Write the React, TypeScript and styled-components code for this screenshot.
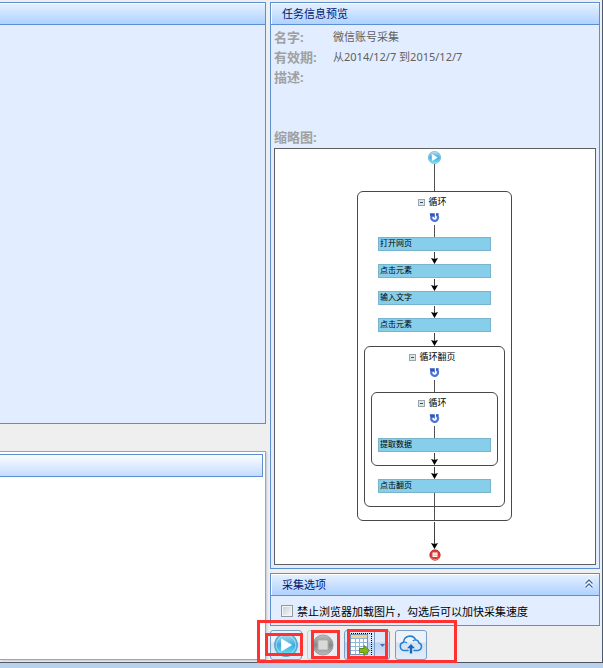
import React from "react";
import styled, { createGlobalStyle } from "styled-components";

const GlobalStyle = createGlobalStyle`
  * { box-sizing: border-box; }
  body {
    margin: 0;
    background: #b9d1ea;
    font-family: "Noto Sans", "Noto Sans CJK SC", sans-serif;
    font-size: 11px;
    color: #000;
  }
  button, input { font: inherit; }
  h2, dl, dd, dt, p { margin: 0; font-weight: normal; }
`;

const Desktop = styled.div`
  min-height: 100vh;
  display: flex;
  flex-direction: column;
  padding-bottom: 5px;
`;

const AppWindow = styled.main`
  flex: 1;
  display: grid;
  grid-template-columns: minmax(0, 1fr) 330px;
  gap: 4px;
  padding: 2px 2px 2px 0;
  background: #efefef;
  border-right: 1px solid #4a5a72;
  border-bottom: 1px solid #4d5460;
`;

const LeftColumn = styled.div`
  display: grid;
  grid-template-rows: 422fr 209fr;
  gap: 27px;
`;

const RightColumn = styled.div`
  display: flex;
  flex-direction: column;
  gap: 4px;
`;

const Panel = styled.section<{ $grow?: boolean; $openLeft?: boolean }>`
  display: flex;
  flex-direction: column;
  flex: ${(p) => (p.$grow ? "1" : "none")};
  border: 1px solid #5b8fcf;
  border-left-width: ${(p) => (p.$openLeft ? "0" : "1px")};
  background: #e2eeff;
`;

const PanelHeader = styled.header<{ $openLeft?: boolean }>`
  display: flex;
  align-items: center;
  justify-content: space-between;
  height: 22px;
  padding: 0 4px 0 11px;
  border-bottom: 1px solid #5b8fcf;
  background: linear-gradient(#e6f1ff, #afd2ff);
  box-shadow: inset ${(p) => (p.$openLeft ? "0" : "1px")} 1px 0 #fff;
  color: #00156e;
`;

const PanelTitle = styled.h2`
  font-size: 11px;
  line-height: 20px;
`;

const ResultPanel = styled.section`
  padding: 2px 2px 0 0;
  border: 1px solid #8ea8cb;
  border-left: 0;
  background: #fff;
  box-shadow: 1px 1px 2px #c3cad6;
`;

const ResultHeader = styled.header`
  height: 23px;
  border: 1px solid #5b8fcf;
  border-left: 0;
  background: linear-gradient(#fbfdff, #c4dcff);
`;

const InfoBody = styled.div`
  flex: 1;
  display: flex;
  flex-direction: column;
  padding: 3px;
`;

const InfoList = styled.dl`
  display: grid;
  grid-template-columns: 59px 1fr;
  grid-template-rows: 20px 20px 60px;
`;

const InfoLabel = styled.dt`
  font-size: 13px;
  font-weight: bold;
  line-height: 18px;
  color: #a0a0a0;
`;

const InfoValue = styled.dd`
  line-height: 17px;
  color: #606060;
`;

const ThumbnailLabel = styled.p`
  height: 20px;
  font-size: 13px;
  font-weight: bold;
  line-height: 18px;
  color: #a0a0a0;
`;

const Thumbnail = styled.div`
  flex: 1;
  display: flex;
  flex-direction: column;
  align-items: center;
  padding: 2px 1px 2px 0;
  border: 1px solid #606060;
  background: #fff;
`;

const Group = styled.div`
  display: flex;
  flex-direction: column;
  align-items: center;
  padding: 0 6px;
  border: 1px solid #484848;
  border-radius: 6px;
`;

const GroupLabel = styled.div`
  display: flex;
  align-items: center;
  gap: 3px;
  height: 20px;
  padding-right: 4px;
  font-size: 9px;
  line-height: 20px;
`;

const Step = styled.div`
  width: 113px;
  height: 14px;
  padding-left: 1px;
  border: 1px solid #79b4cf;
  background: #87ceeb;
  font-size: 8px;
  line-height: 10px;
`;

const Drawing = styled.svg`
  display: block;
  flex: none;
`;

const LoopDrawing = styled(Drawing)`
  margin-bottom: 2px;
`;

const OptionRow = styled.label`
  display: flex;
  align-items: center;
  gap: 4px;
  height: 29px;
  padding-left: 10px;
`;

const CheckBox = styled.input`
  appearance: none;
  width: 12px;
  height: 12px;
  margin: 1px 0 0;
  border: 1px solid #8e9aa8;
  background: linear-gradient(135deg, #c9cfd6, #f8f8f8);
  box-shadow: inset 0 0 0 1px #f4f4f4;
`;

const CollapseButton = styled.button`
  width: 12px;
  height: 14px;
  padding: 0;
  border: 0;
  background: none;
`;

const Toolbar = styled.div`
  position: relative;
  display: flex;
  gap: 5px;
  height: 30px;
`;

const ToolButton = styled.button`
  display: flex;
  align-items: center;
  justify-content: center;
  width: 32px;
  padding: 0;
  border: 1px solid #7a9cc8;
  border-radius: 3px;
  background: linear-gradient(#edf3fb 0 40%, #d3e1f3 42%, #e2ecf9);
  &:disabled { border-color: #c3cfdf; background: #e9eef5; }
`;

const SplitButton = styled.div`
  display: flex;
  width: 46px;
  border: 1px solid #7a9cc8;
  border-radius: 3px;
  background: linear-gradient(#dce8f8 0 40%, #b9d1f0 42%, #d6e5f9);
`;

const SplitMain = styled.button`
  display: flex;
  align-items: center;
  justify-content: center;
  width: 25px;
  margin: 2px;
  padding: 0;
  border: 1px dotted #000;
  background: none;
`;

const SplitArrow = styled.button`
  flex: 1;
  display: flex;
  align-items: center;
  justify-content: center;
  padding: 0;
  border: 0;
  border-left: 1px solid #7a9cc8;
  background: none;
`;

/* Highlight frames laid over the toolbar. */
const Highlight = styled.div<{ $x: number; $y: number; $w: number; $h: number }>`
  position: absolute;
  left: ${(p) => p.$x}px;
  top: ${(p) => p.$y}px;
  width: ${(p) => p.$w}px;
  height: ${(p) => p.$h}px;
  border: 3px solid #ff3232;
  pointer-events: none;
`;

const Line = ({ length }: { length: number }) => (
  <Drawing width="7" height={length} viewBox={`0 0 7 ${length}`} aria-hidden="true">
    <path d={`M3.5 0V${length}`} stroke="#505050" />
  </Drawing>
);

const Arrow = ({ length }: { length: number }) => (
  <Drawing width="7" height={length} viewBox={`0 0 7 ${length}`} aria-hidden="true">
    <path d={`M3.5 1V${length - 4}`} stroke="#404040" />
    <path d={`M0 ${length - 6}L3.5 ${length - 5}L7 ${length - 6}L3.5 ${length}Z`} fill="#000" />
  </Drawing>
);

const PlayIcon = ({ size, id }: { size: number; id: string }) => (
  <Drawing width={size} height={size} viewBox="0 0 24 24" aria-hidden="true">
    <defs>
      <linearGradient id={id} x1="0" y1="0" x2="0" y2="1">
        <stop offset="0" stopColor="#b4dff2" />
        <stop offset="0.5" stopColor="#3fabdd" />
        <stop offset="1" stopColor="#6be6fb" />
      </linearGradient>
    </defs>
    <circle cx="12" cy="12" r="11.3" fill={`url(#${id})`} stroke="#5aa5cd" strokeWidth="1.2" />
    <circle cx="12" cy="12" r="9.8" fill="none" stroke="#c5eefa" strokeOpacity="0.6" />
    <path d="M7.5 6L17.5 12L7.5 18Z" fill="#fff" stroke="#e7f8ff" strokeLinejoin="round" />
  </Drawing>
);

const StopIcon = () => (
  <Drawing width="22" height="22" viewBox="0 0 24 24" aria-hidden="true">
    <defs>
      <linearGradient id="stopFill" x1="0" y1="0" x2="0" y2="1">
        <stop offset="0" stopColor="#bcbcbc" />
        <stop offset="0.5" stopColor="#898989" />
        <stop offset="1" stopColor="#bcbcbc" />
      </linearGradient>
    </defs>
    <circle cx="12" cy="12" r="11" fill="url(#stopFill)" stroke="#999" />
    <rect x="6.5" y="6.5" width="11" height="11" rx="1" fill="#d9d9d9" stroke="#aaa" />
  </Drawing>
);

const EndIcon = () => (
  <Drawing width="12" height="12" viewBox="0 0 12 12" aria-hidden="true">
    <circle cx="6" cy="6" r="5.2" fill="#dc3a36" stroke="#b92a2a" strokeWidth="0.8" />
    <path d="M2 8.5A4.7 4.7 0 0 0 10 8.5" fill="none" stroke="#f58a80" />
    <rect x="3.5" y="3.5" width="5" height="4.5" fill="#fff" />
    <path d="M4.5 5H8M4.5 6.5H8" stroke="#e89a96" strokeWidth="0.6" />
  </Drawing>
);

const LoopIcon = () => (
  <LoopDrawing width="11" height="11" viewBox="0 0 11 11" aria-hidden="true">
    <path d="M7.2 2.6A3.3 3.3 0 1 1 2.6 4.2" fill="none" stroke="#4a72d8" strokeWidth="2.2" />
    <path d="M0.8 1.2H5.8V6L4.2 4.6L2.6 5L1 3.4Z" fill="#3158be" />
    <path d="M7 1.2H9.6V3.2H7Z" fill="#3158be" />
  </LoopDrawing>
);

const FoldIcon = () => (
  <Drawing width="7" height="7" viewBox="0 0 7 7" aria-hidden="true">
    <rect x=".5" y=".5" width="6" height="6" fill="#dce6e8" stroke="#98a5ac" />
    <path d="M2 3.5H5" stroke="#35505e" />
  </Drawing>
);

const CollapseIcon = () => (
  <Drawing width="12" height="14" viewBox="0 0 12 14" aria-hidden="true">
    <path d="M2.5 5.5L6 2L9.5 5.5M2.5 9.5L6 6L9.5 9.5" fill="none" stroke="#fff" strokeWidth="3" />
    <path d="M2.5 5.5L6 2L9.5 5.5M2.5 9.5L6 6L9.5 9.5" fill="none" stroke="#3f65a5" strokeWidth="1.3" />
  </Drawing>
);

const ExportIcon = () => (
  <Drawing width="22" height="24" viewBox="0 0 22 24" aria-hidden="true">
    <rect x="1.5" y="1.5" width="17" height="20" fill="#fff" stroke="#7793b4" />
    <rect x="2" y="2" width="16" height="3" fill="#f1d38a" />
    <path d="M2 5.5H18M2 9.5H18M2 13.5H18M2 17.5H18M6.5 5V21M10.5 5V21M14.5 5V21" stroke="#91b5dc" />
    <path d="M10.5 15.5H15V12.5L20.5 17.5L15 22.5V19.5H10.5Z" fill="#82b81e" stroke="#5c8c12" />
  </Drawing>
);

const DropIcon = () => (
  <Drawing width="5" height="3" viewBox="0 0 5 3" aria-hidden="true">
    <path d="M0 0H5L2.5 3Z" fill="#456fae" />
  </Drawing>
);

const CloudIcon = () => (
  <Drawing width="24" height="20" viewBox="0 0 24 20" aria-hidden="true">
    <path
      d="M9 15.5H5.5A4.2 4.2 0 0 1 4.6 7.2A6.3 6.3 0 0 1 16.6 4.8A4.3 4.3 0 0 1 20 8A3.9 3.9 0 0 1 19 15.5H15"
      fill="none" stroke="#2580d2" strokeWidth="1.5" strokeLinecap="round"
    />
    <path d="M4.6 7.2Q6.6 6.6 8 8M16.6 4.8Q14.8 4.8 13.8 6.2" fill="none" stroke="#2580d2" strokeWidth="1.2" />
    <path d="M12 9L16 13.2H13.2V18.5H10.8V13.2H8Z" fill="#1569be" />
  </Drawing>
);

const LoopHead = ({ name }: { name: string }) => (
  <>
    <GroupLabel><FoldIcon />{name}</GroupLabel>
    <LoopIcon />
    <Line length={12} />
  </>
);

const steps = ["打开网页", "点击元素", "输入文字", "点击元素"];

const FlowChart = () => (
  <Thumbnail>
    <PlayIcon size={13} id="startFill" />
    <Line length={27} />
    <Group>
      <LoopHead name="循环" />
      {steps.map((name, i) => (
        <React.Fragment key={i}>
          <Step>{name}</Step>
          <Arrow length={i === steps.length - 1 ? 14 : 13} />
        </React.Fragment>
      ))}
      <Group>
        <LoopHead name="循环翻页" />
        <Group>
          <LoopHead name="循环" />
          <Step>提取数据</Step>
          <Arrow length={13} />
        </Group>
        <Arrow length={13} />
        <Step>点击翻页</Step>
        <Line length={13} />
      </Group>
      <Line length={13} />
    </Group>
    <Arrow length={28} />
    <EndIcon />
  </Thumbnail>
);

export default function App() {
  return (
    <Desktop>
      <GlobalStyle />
      <AppWindow>
        <LeftColumn>
          <Panel $openLeft><PanelHeader $openLeft /></Panel>
          <ResultPanel><ResultHeader /></ResultPanel>
        </LeftColumn>
        <RightColumn>
          <Panel $grow>
            <PanelHeader><PanelTitle>任务信息预览</PanelTitle></PanelHeader>
            <InfoBody>
              <InfoList>
                <InfoLabel>名字:</InfoLabel>
                <InfoValue>微信账号采集</InfoValue>
                <InfoLabel>有效期:</InfoLabel>
                <InfoValue>从2014/12/7 到2015/12/7</InfoValue>
                <InfoLabel>描述:</InfoLabel>
                <InfoValue />
              </InfoList>
              <ThumbnailLabel>缩略图:</ThumbnailLabel>
              <FlowChart />
            </InfoBody>
          </Panel>
          <Panel>
            <PanelHeader>
              <PanelTitle>采集选项</PanelTitle>
              <CollapseButton aria-label="收起"><CollapseIcon /></CollapseButton>
            </PanelHeader>
            <OptionRow>
              <CheckBox type="checkbox" />
              禁止浏览器加载图片，勾选后可以加快采集速度
            </OptionRow>
          </Panel>
          <Toolbar>
            <ToolButton aria-label="开始"><PlayIcon size={24} id="runFill" /></ToolButton>
            <ToolButton aria-label="停止" disabled><StopIcon /></ToolButton>
            <SplitButton>
              <SplitMain aria-label="导出"><ExportIcon /></SplitMain>
              <SplitArrow aria-label="导出选项"><DropIcon /></SplitArrow>
            </SplitButton>
            <ToolButton aria-label="上传"><CloudIcon /></ToolButton>
            <Highlight $x={-13} $y={-10} $w={200} $h={43} />
            <Highlight $x={-5} $y={3} $w={38} $h={23} />
            <Highlight $x={41} $y={0} $w={29} $h={29} />
            <Highlight $x={77} $y={-1} $w={41} $h={30} />
          </Toolbar>
        </RightColumn>
      </AppWindow>
    </Desktop>
  );
}
